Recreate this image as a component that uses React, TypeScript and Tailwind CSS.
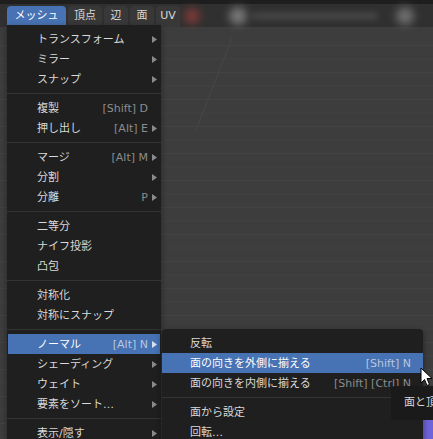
import React from "react"

type Item =
  | { kind: "sep" }
  | { kind: "item"; label: string; shortcut?: string; sub?: boolean; active?: boolean }

const mainItems: Item[] = [
  { kind: "item", label: "トランスフォーム", sub: true },
  { kind: "item", label: "ミラー", sub: true },
  { kind: "item", label: "スナップ", sub: true },
  { kind: "sep" },
  { kind: "item", label: "複製", shortcut: "[Shift] D" },
  { kind: "item", label: "押し出し", shortcut: "[Alt] E", sub: true },
  { kind: "sep" },
  { kind: "item", label: "マージ", shortcut: "[Alt] M", sub: true },
  { kind: "item", label: "分割", sub: true },
  { kind: "item", label: "分離", shortcut: "P", sub: true },
  { kind: "sep" },
  { kind: "item", label: "二等分" },
  { kind: "item", label: "ナイフ投影" },
  { kind: "item", label: "凸包" },
  { kind: "sep" },
  { kind: "item", label: "対称化" },
  { kind: "item", label: "対称にスナップ" },
  { kind: "sep" },
  { kind: "item", label: "ノーマル", shortcut: "[Alt] N", sub: true, active: true },
  { kind: "item", label: "シェーディング", sub: true },
  { kind: "item", label: "ウェイト", sub: true },
  { kind: "item", label: "要素をソート…", sub: true },
  { kind: "sep" },
  { kind: "item", label: "表示/隠す", sub: true },
]

const normalItems: Item[] = [
  { kind: "item", label: "反転" },
  { kind: "item", label: "面の向きを外側に揃える", shortcut: "[Shift] N", active: true },
  { kind: "item", label: "面の向きを内側に揃える", shortcut: "[Shift] [Ctrl] N" },
  { kind: "sep" },
  { kind: "item", label: "面から設定" },
  { kind: "item", label: "回転…" },
]

const font = "font-['DejaVu_Sans','Noto_Sans_CJK_JP',sans-serif]"

const Arrow = ({ light }: { light?: boolean }) => (
  <svg width="5" height="7" viewBox="0 0 5 7">
    <path d="M0 0 L5 3.5 L0 7 Z" fill={light ? "#d6e0f0" : "#8a8a8a"} />
  </svg>
)

const tabs = [
  { label: "頂点", w: "w-[34px]" },
  { label: "辺", w: "w-[24px]" },
  { label: "面", w: "w-[24px]" },
  { label: "UV", w: "w-[24px]" },
]

export default function App() {
  return (
    <div className={`relative w-[433px] h-[439px] overflow-hidden bg-[#3d3d3d] text-[11px] ${font}`}>
      {/* viewport grid */}
      <svg className="absolute left-0 top-0" width="433" height="439">
        {Array.from({ length: 30 }).map((_, i) => (
          <line key={i} x1="0" x2="433" y1={45.5 + i * 13.5} y2={45.5 + i * 13.5} stroke="#434343" strokeWidth="1" />
        ))}
        <line x1="232" y1="38" x2="196" y2="130" stroke="#474747" strokeWidth="1" />
      </svg>

      {/* header */}
      <div className="relative">
        <div className="h-[4px] bg-[#1e1e1e]" />
        <div className="h-[23px] bg-[#303030] flex items-end pl-[7px] gap-[2px]">
          <div className="w-[59px] h-[21px] rounded-t-[4px] bg-[#4772b3] text-white flex items-center justify-center">
            メッシュ
          </div>
          {tabs.map(t => (
            <div
              key={t.label}
              className={`${t.w} h-[21px] rounded-t-[4px] bg-[#383838] text-[#d8d8d8] flex items-center justify-center`}
            >
              {t.label}
            </div>
          ))}
          <div className="flex-1 h-[21px] relative">
            <div className="absolute left-[2px] top-[2px] w-[16px] h-[16px] rounded-full bg-[#7a3a36] blur-[4px]" />
            <div className="absolute left-[47px] top-[1px] w-[18px] h-[18px] rounded-full bg-[#777] blur-[4px]" />
            <div className="absolute left-[70px] top-[7px] w-[126px] h-[6px] rounded bg-[#4b4b4b] blur-[3px]" />
            <div className="absolute left-[214px] top-[1px] w-[18px] h-[18px] rounded-full bg-[#6e6e6e] blur-[4px]" />
          </div>
        </div>
      </div>

      {/* bottom right scene bits */}
      <div className="absolute left-[262px] top-[417px] w-[171px] h-[22px] bg-[#2a2b36]" />
      <div className="absolute left-[423px] top-[405px] w-[10px] h-[34px] bg-[#6e63d8]" />

      {/* main menu */}
      <div className="absolute left-[7px] top-[25px] w-[154px] h-[420px] bg-[#1f1f1f] pt-[4px] shadow-[0_2px_6px_rgba(0,0,0,0.4)]">
        {mainItems.map((it, i) =>
          it.kind === "sep" ? (
            <div key={i} className="h-[9px] flex items-center">
              <div className="w-full h-px bg-[#333333]" />
            </div>
          ) : (
            <div
              key={i}
              className={`h-[20px] mx-px flex items-center pl-[29px] pr-[3px] ${
                it.active ? "bg-[#4772b3] text-white" : "text-[#d9d9d9]"
              }`}
            >
              <span className="flex-1 whitespace-nowrap relative top-px">{it.label}</span>
              {it.shortcut && (
                <span className={`relative top-px ${it.active ? "text-[#b9c7de]" : "text-[#8c8c8c]"}`}>{it.shortcut}</span>
              )}
              <span className="w-[9px] flex justify-end">{it.sub && <Arrow light={it.active} />}</span>
            </div>
          )
        )}
      </div>

      {/* normal submenu */}
      <div className="absolute left-[162px] top-[329px] w-[261px] h-[120px] rounded-[4px] bg-[#1f1f1f] pt-[4px] shadow-[0_2px_6px_rgba(0,0,0,0.45)]">
        {normalItems.map((it, i) =>
          it.kind === "sep" ? (
            <div key={i} className="h-[9px] flex items-center">
              <div className="w-full h-px bg-[#333333]" />
            </div>
          ) : (
            <div
              key={i}
              className={`h-[20px] flex items-center pl-[28px] pr-[12px] ${
                it.active ? "bg-[#4772b3] text-white" : "text-[#d9d9d9]"
              }`}
            >
              <span className="flex-1 whitespace-nowrap relative top-px">{it.label}</span>
              {it.shortcut && (
                <span className={`whitespace-nowrap relative top-px ${it.active ? "text-[#b9c7de]" : "text-[#8c8c8c]"}`}>
                  {it.shortcut}
                </span>
              )}
            </div>
          )
        )}
      </div>

      {/* tooltip */}
      <div className="absolute left-[391px] top-[386px] w-[60px] h-[34px] rounded-[4px] bg-[#1a1a1a] text-[#d9d9d9] pl-[13px] flex items-center whitespace-nowrap">
        面と頂点
      </div>

      {/* cursor */}
      <svg className="absolute left-[420px] top-[367px]" width="14" height="21" viewBox="0 0 14 21">
        <path d="M1 1 L1 16 L4.5 12.5 L7 18.5 L9.5 17.5 L7 11.5 L12 11.5 Z" fill="#ffffff" stroke="#000000" strokeWidth="1" strokeLinejoin="round" />
      </svg>
    </div>
  )
}
